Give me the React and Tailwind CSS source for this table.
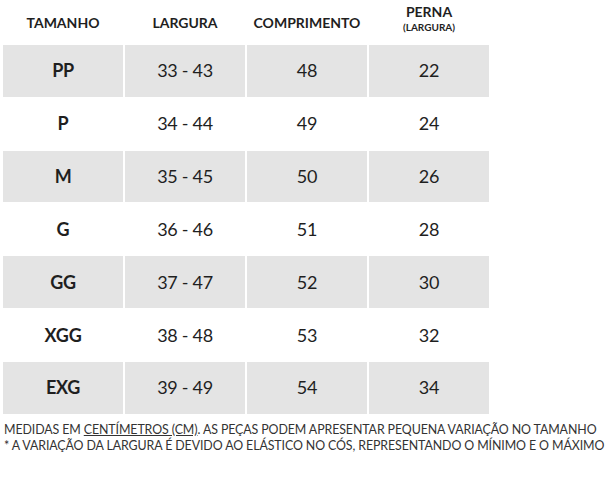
export default function App() {
  const rows = [
    ["PP", "33 - 43", "48", "22"],
    ["P", "34 - 44", "49", "24"],
    ["M", "35 - 45", "50", "26"],
    ["G", "36 - 46", "51", "28"],
    ["GG", "37 - 47", "52", "30"],
    ["XGG", "38 - 48", "53", "32"],
    ["EXG", "39 - 49", "54", "34"],
  ];
  return (
    <div className="w-[612px] h-[478px] bg-white text-[#1f1f1f] overflow-hidden" style={{ fontFamily: "Lato, 'Noto Sans', sans-serif" }}>
      <div className="pl-[3px]">
        <div className="grid grid-cols-[120px_120px_120px_120px] gap-x-[2px] h-[45px] items-center text-[14px] font-bold">
          <div className="text-center">TAMANHO</div>
          <div className="text-center">LARGURA</div>
          <div className="text-center">COMPRIMENTO</div>
          <div className="text-center flex flex-col items-center leading-none pb-[9px]">
            <span className="text-[14px]">PERNA</span>
            <span className="text-[10px] mt-[3px]">(LARGURA)</span>
          </div>
        </div>
        {rows.map((r, i) => (
          <div key={i} className="grid grid-cols-[120px_120px_120px_120px] gap-x-[2px] h-[52.83px] pb-[1px] text-[18px] tracking-[-0.3px]">
            {r.map((c, j) => (
              <div
                key={j}
                className={`flex items-center justify-center ${i % 2 === 0 ? "bg-[#e4e4e4]" : "bg-white"} ${j === 0 ? "font-bold" : ""}`}
              >
                {c}
              </div>
            ))}
          </div>
        ))}
      </div>
      <div className="pl-[4px] pt-[7px] text-[12.4px] tracking-[-0.1px] leading-[16px] text-[#333] whitespace-nowrap">
        <div>
          MEDIDAS EM <span className="underline">CENTÍMETROS (CM)</span>. AS PEÇAS PODEM APRESENTAR PEQUENA VARIAÇÃO NO TAMANHO
        </div>
        <div>* A VARIAÇÃO DA LARGURA É DEVIDO AO ELÁSTICO NO CÓS, REPRESENTANDO O MÍNIMO E O MÁXIMO</div>
      </div>
    </div>
  );
}
